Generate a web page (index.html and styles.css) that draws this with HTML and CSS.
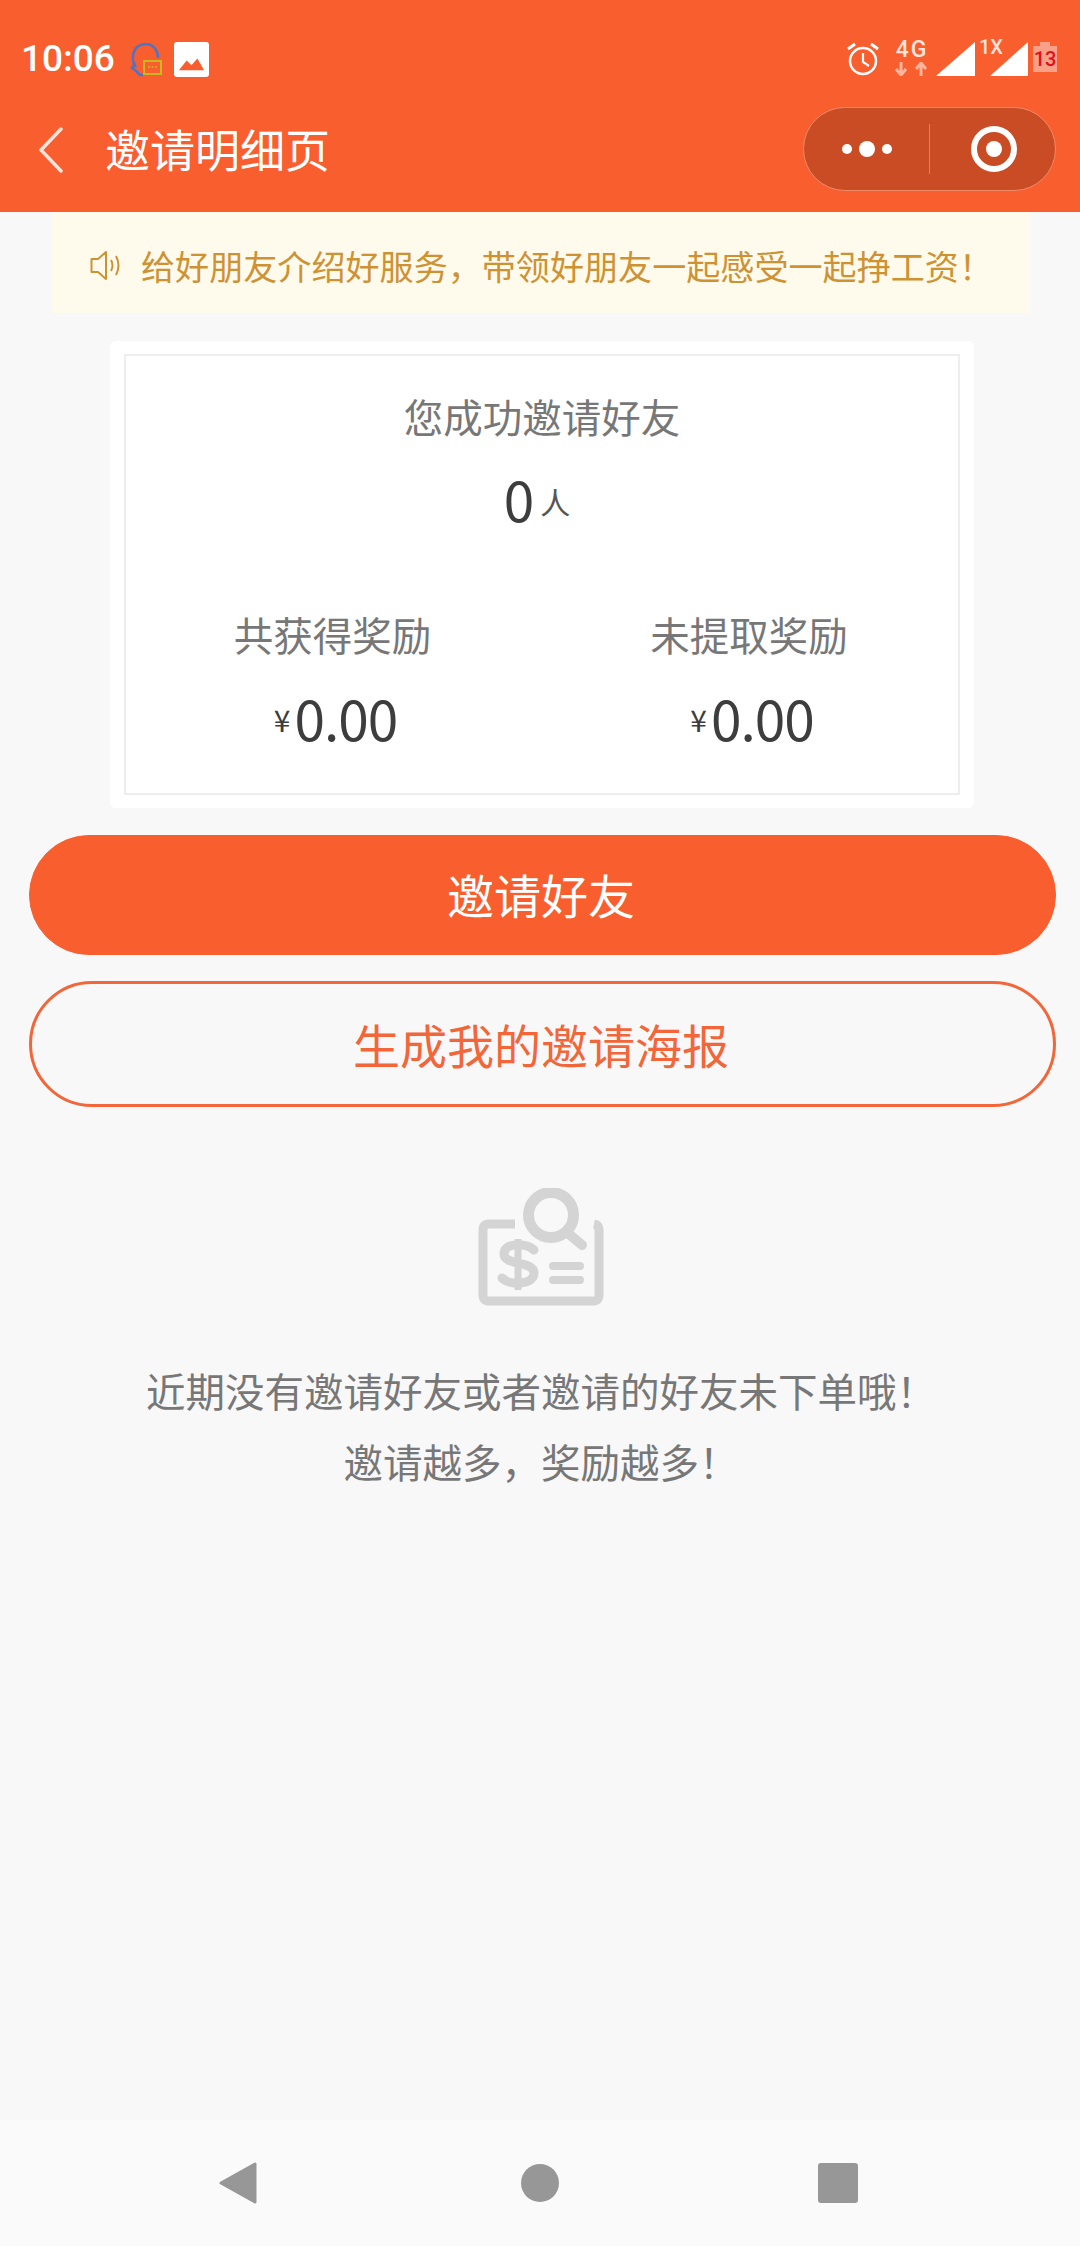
FILE: index.html
```html
<!DOCTYPE html>
<html lang="zh-CN">
<head>
  <meta charset="UTF-8">
  <meta name="viewport" content="width=device-width, initial-scale=1.0">
  <title>邀请明细页</title>
  <link rel="stylesheet" href="styles.css">
</head>
<body>
  <div class="page">
    <header class="header">
      <!-- Status bar -->
      <div class="status-bar">
        <div class="status-left">
          <span class="time">10:06</span>
          <svg class="icon-agent" width="32" height="36" viewBox="0 0 32 36">
            <path d="M6 26 C1 20 1 4 15 3 C25 3 28 11 28 17" fill="none" stroke="#4f74c4" stroke-width="2.5"/>
            <path d="M5 22 L2 27 L6 30 L10 34 L13 34" fill="none" stroke="#4f74c4" stroke-width="2.5"/>
            <rect x="14" y="20" width="17" height="13" fill="none" stroke="#c9b81f" stroke-width="2"/>
            <circle cx="19" cy="26" r="1" fill="#c9b81f"/>
            <circle cx="22.500" cy="26" r="1" fill="#c9b81f"/>
            <circle cx="26" cy="26" r="1" fill="#c9b81f"/>
          </svg>
          <svg class="icon-picture" width="35" height="35" viewBox="0 0 36 36">
            <rect width="36" height="36" rx="3" fill="#fff"/>
            <path d="M5 29 L13 19 L18 24 L24 17 L31 29 Z" fill="#f95e2f"/>
          </svg>
        </div>
        <div class="status-right">
          <svg width="32" height="34" viewBox="0 0 32 34">
            <circle cx="16" cy="19" r="13" fill="none" stroke="#fff" stroke-width="2.500"/>
            <path d="M16 11 V20 L22 24" fill="none" stroke="#fff" stroke-width="2.200"/>
            <path d="M1 7 L8 2 M31 7 L24 2" stroke="#fff" stroke-width="3"/>
          </svg>
          <div class="net">
            <span class="net-label">4G</span>
            <svg width="34" height="14" viewBox="0 0 34 14">
              <path d="M6 0 V12 M1 7 L6 13 L11 7" fill="none" stroke="#fdb59c" stroke-width="3"/>
              <path d="M26 14 V2 M21 7 L26 1 L31 7" fill="none" stroke="#fdb59c" stroke-width="3"/>
            </svg>
          </div>
          <svg class="signal" width="39" height="34" viewBox="0 0 39 35" preserveAspectRatio="none"><path d="M0 35 L39 0 V35 Z" fill="#fff"/></svg>
          <div class="signal-second">
            <span class="sim-label">1X</span>
            <svg width="38" height="34" viewBox="0 0 38 35" preserveAspectRatio="none"><path d="M0 35 L38 0 V35 Z" fill="#fff"/></svg>
          </div>
          <div class="battery"><span class="battery-cap"></span><span class="battery-num">13</span></div>
        </div>
      </div>
      <!-- Nav bar -->
      <div class="nav-bar">
        <svg class="back" width="26" height="46" viewBox="0 0 26 46">
          <path d="M23 2 L3 23 L23 44" fill="none" stroke="#fde3da" stroke-width="3.500" stroke-linecap="round" stroke-linejoin="round"/>
        </svg>
        <h1 class="nav-title">邀请明细页</h1>
        <div class="capsule">
          <div class="capsule-dots">
            <span class="dot"></span><span class="dot dot-big"></span><span class="dot"></span>
          </div>
          <span class="capsule-line"></span>
          <div class="capsule-target"><span class="target-ring"><span class="target-core"></span></span></div>
        </div>
      </div>
    </header>

    <main class="content">
      <div class="notice">
        <svg width="32" height="32" viewBox="0 0 32 32">
          <path d="M1.500 10 H8 L16 3 V30 L8 23 H1.500 Z" fill="none" stroke="#cf9233" stroke-width="2" stroke-linejoin="round"/>
          <path d="M21 11 Q24 16.500 21 22 M26 7 Q31 16.500 26 26" fill="none" stroke="#cf9233" stroke-width="2"/>
        </svg>
        <span>给好朋友介绍好服务，带领好朋友一起感受一起挣工资！</span>
      </div>

      <section class="card">
        <div class="card-inner">
          <p class="label">您成功邀请好友</p>
          <p class="count">0<span class="unit">人</span></p>
          <div class="rewards">
            <div class="reward">
              <p class="label">共获得奖励</p>
              <p class="money"><span class="yen">¥</span>0.00</p>
            </div>
            <div class="reward">
              <p class="label">未提取奖励</p>
              <p class="money"><span class="yen">¥</span>0.00</p>
            </div>
          </div>
        </div>
      </section>

      <button class="btn btn-primary" type="button">邀请好友</button>
      <button class="btn btn-outline" type="button">生成我的邀请海报</button>

      <div class="empty">
        <svg class="empty-icon" width="128" height="118" viewBox="0 0 128 118">
          <path d="M38 36 H12 Q6 36 6 42 V107 Q6 113 12 113 H116 Q122 113 122 107 V42 Q122 37 117 36" fill="none" stroke="#d4d4d4" stroke-width="9"/>
          <circle cx="74" cy="27" r="22.500" fill="none" stroke="#d4d4d4" stroke-width="11"/>
          <path d="M92 46 L105 57" stroke="#d4d4d4" stroke-width="10" stroke-linecap="round"/>
          <path d="M57 62 C49 55 27 54 27 66 C27 78 57 72 57 85 C57 97 33 98 25 90" fill="none" stroke="#d4d4d4" stroke-width="9" stroke-linecap="round"/>
          <path d="M41 51 V102" stroke="#d4d4d4" stroke-width="7"/>
          <path d="M76 78 H103 M76 92 H103" stroke="#d4d4d4" stroke-width="8" stroke-linecap="round"/>
        </svg>
        <p class="empty-text">近期没有邀请好友或者邀请的好友未下单哦！</p>
        <p class="empty-text">邀请越多，奖励越多！</p>
      </div>
    </main>

    <!-- Android nav -->
    <footer class="sys-nav">
      <svg width="38" height="42" viewBox="0 0 38 42"><path d="M36 2 V40 L2 21 Z" fill="#979797" stroke="#979797" stroke-width="3" stroke-linejoin="round"/></svg>
      <span class="sys-circle"></span>
      <span class="sys-square"></span>
    </footer>
  </div>
</body>
</html>
```

FILE: styles.css
```css
* {
  box-sizing: border-box;
}
body {
  margin: 0;
  font-family: "Noto Sans CJK SC", "Noto Sans", sans-serif;
  background: #f8f8f8;
}
p, h1 {
  margin: 0;
  font-weight: normal;
}
.page {
  width: 1080px;
  height: 2246px;
  display: flex;
  flex-direction: column;
}

/* Header */
.header {
  height: 212px;
  background: #f95e2f;
  color: #fff;
  flex-shrink: 0;
}
.status-bar {
  height: 118px;
  padding: 40px 23px 0 21px;
  display: flex;
  justify-content: space-between;
  align-items: flex-start;
}
.status-left {
  display: flex;
  align-items: center;
  gap: 12px;
}
.time {
  font-family: Roboto, sans-serif;
  font-size: 37px;
  font-weight: 500;
  line-height: 38px;
  margin-right: 3px;
}
.status-right {
  display: flex;
  align-items: flex-end;
  height: 36px;
}
.net {
  margin-left: 16px;
  width: 34px;
  display: flex;
  flex-direction: column;
  align-items: center;
}
.net-label {
  font-family: Roboto, sans-serif;
  font-size: 23px;
  font-weight: 500;
  line-height: 20px;
  letter-spacing: 2px;
  margin-bottom: 2px;
  color: #fde3da;
}
.signal {
  margin-left: 7px;
}
.signal-second {
  position: relative;
  margin-left: 15px;
  height: 34px;
  display: flex;
}
.sim-label {
  position: absolute;
  left: -11px;
  top: -4px;
  font-family: Roboto, sans-serif;
  font-size: 20px;
  font-weight: 500;
  line-height: 18px;
  color: #fde3da;
}
.battery {
  position: relative;
  margin: 0 0 4px 5px;
  width: 24px;
  height: 26px;
  background: #f9a188;
  display: flex;
  align-items: center;
  justify-content: center;
}
.battery-cap {
  position: absolute;
  top: -4px;
  left: 7px;
  width: 10px;
  height: 4px;
  background: #f9a188;
}
.battery-num {
  font-family: Roboto, sans-serif;
  font-size: 20px;
  font-weight: 500;
  color: #e0101c;
}
.nav-bar {
  height: 94px;
  display: flex;
  align-items: flex-start;
  padding-left: 38px;
  position: relative;
}
.back {
  margin-top: 9px;
}
.nav-title {
  margin-left: 41px;
  font-size: 45px;
  line-height: 54px;
  margin-top: 4px;
}
.capsule {
  position: absolute;
  left: 803px;
  top: -11px;
  width: 253px;
  height: 84px;
  border-radius: 42px;
  border: 1px solid #f08a68;
  background: #c94c24;
  display: flex;
  align-items: center;
}
.capsule-dots {
  width: 125px;
  display: flex;
  justify-content: center;
  align-items: center;
  gap: 7px;
}
.dot {
  width: 10px;
  height: 10px;
  border-radius: 50%;
  background: #fff;
}
.dot-big {
  width: 16px;
  height: 16px;
}
.capsule-line {
  width: 1px;
  height: 50px;
  background: #e0805f;
}
.capsule-target {
  flex: 1;
  display: flex;
  justify-content: center;
  padding-left: 3px;
}
.target-ring {
  width: 46px;
  height: 46px;
  border-radius: 50%;
  border: 6px solid #fff;
  display: flex;
  align-items: center;
  justify-content: center;
}
.target-core {
  width: 16px;
  height: 16px;
  border-radius: 50%;
  background: #fff;
}

/* Content */
.content {
  flex: 1;
  display: flex;
  flex-direction: column;
  align-items: flex-start;
}
.notice {
  margin-left: 52px;
  width: 978px;
  height: 101px;
  background: #fefaec;
  color: #cf9233;
  font-size: 34.100px;
  display: flex;
  align-items: center;
  gap: 19px;
  padding: 5px 0 0 38px;
}
.card {
  margin: 28px 0 0 110px;
  width: 864px;
  height: 467px;
  background: #fff;
  border-radius: 6px;
  padding: 13px 14px;
}
.card-inner {
  height: 100%;
  border: 2px solid #eeeeee;
  text-align: center;
  padding-top: 33px;
}
.label {
  font-size: 39.500px;
  line-height: 54px;
  color: #777;
}
.count {
  margin-top: 24px;
  padding-right: 10px;
  font-size: 55px;
  line-height: 62px;
  color: #3d3d3d;
}
.unit {
  font-size: 30px;
  margin-left: 6px;
  vertical-align: 8px;
  color: #555;
}
.rewards {
  margin-top: 75px;
  display: grid;
  grid-template-columns: 413px 414px;
  gap: 3px;
}
.money {
  margin-top: 24px;
  padding-left: 6px;
  font-size: 55px;
  line-height: 64px;
  letter-spacing: -1px;
  color: #3d3d3d;
}
.yen {
  font-size: 30px;
  margin-right: 5px;
  vertical-align: 9px;
}
.btn {
  display: block;
  margin-left: 29px;
  width: 1027px;
  font-family: inherit;
  font-size: 47px;
  border-radius: 63px;
}
.btn-primary {
  margin-top: 27px;
  height: 120px;
  padding: 0 3px 4px 0;
  background: #f95e2f;
  border: 1px solid #f95e2f;
  color: #fff;
}
.btn-outline {
  margin-top: 26px;
  height: 126px;
  padding: 0 3px 2px 0;
  background: transparent;
  border: 3px solid #f2663a;
  color: #f2663a;
}
.empty {
  margin-top: 81px;
  align-self: stretch;
  padding-left: 2px;
  display: flex;
  flex-direction: column;
  align-items: center;
}
.empty-icon {
  margin-bottom: 49px;
  filter: blur(0.5px);
}
.empty-text {
  font-size: 39.500px;
  line-height: 70px;
  color: #777;
}
.empty-text + .empty-text {
  margin-top: 1px;
}

/* System nav */
.sys-nav {
  height: 126px;
  flex-shrink: 0;
  background: #fafafa;
  display: flex;
  align-items: center;
  padding: 0 222px 0 219px;
  justify-content: space-between;
}
.sys-circle {
  width: 38px;
  height: 38px;
  margin-left: 5px;
  border-radius: 50%;
  background: #979797;
}
.sys-square {
  width: 40px;
  height: 40px;
  border-radius: 3px;
  background: #979797;
}
```
